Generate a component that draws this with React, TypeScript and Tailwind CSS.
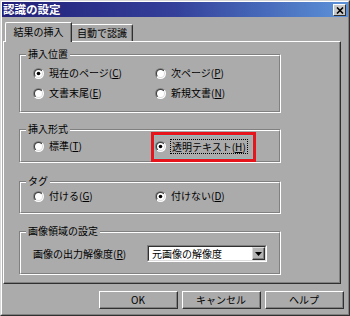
import React, { useId } from "react";

const FONT = { fontFamily: '"Noto Sans CJK JP", "Noto Sans", sans-serif' };

function Radio({ checked }: { checked?: boolean }) {
  const id = useId().replace(/:/g, "");
  return (
    <svg width="11" height="11" viewBox="0 0 11 11" className="shrink-0">
      <defs>
        <linearGradient id={`o${id}`} x1="0" y1="0" x2="1" y2="1">
          <stop offset="0.5" stopColor="#808080" />
          <stop offset="0.5" stopColor="#ffffff" />
        </linearGradient>
        <linearGradient id={`i${id}`} x1="0" y1="0" x2="1" y2="1">
          <stop offset="0.5" stopColor="#404040" />
          <stop offset="0.5" stopColor="#dcdcdc" />
        </linearGradient>
      </defs>
      <circle cx="5.5" cy="5.5" r="5.5" fill={`url(#o${id})`} />
      <circle cx="5.5" cy="5.5" r="4.5" fill={`url(#i${id})`} />
      <circle cx="5.5" cy="5.5" r="3.5" fill="#ffffff" />
      {checked && <circle cx="5.5" cy="5.5" r="1.8" fill="#000" />}
    </svg>
  );
}

function Key({ k }: { k: string }) {
  return (
    <>
      (<span className="underline underline-offset-1">{k}</span>)
    </>
  );
}

function Group({
  label,
  className,
  children,
}: {
  label: string;
  className: string;
  children?: React.ReactNode;
}) {
  return (
    <div
      className={`relative ml-[15px] w-[262px] border border-t-[#808080] border-l-[#808080] border-r-white border-b-white ${className}`}
    >
      <div className="h-full border border-t-white border-l-white border-r-[#808080] border-b-[#808080]">
        {children}
      </div>
      <span className="absolute left-[6px] top-[-8px] bg-[#ababab] px-[2px] text-[10px] leading-[14px] text-black">
        {label}
      </span>
    </div>
  );
}

function RadioItem({
  checked,
  children,
  width,
}: {
  checked?: boolean;
  children: React.ReactNode;
  width?: string;
}) {
  return (
    <div className={`flex h-[16px] items-center ${width ?? ""}`}>
      <Radio checked={checked} />
      <span className="ml-[5px] text-[10px] leading-[14px] text-black whitespace-nowrap">
        {children}
      </span>
    </div>
  );
}

function Button({ children }: { children: React.ReactNode }) {
  return (
    <div className="h-[18px] w-[79px] border border-t-white border-l-white border-r-[#303030] border-b-[#303030]">
      <div className="flex h-full items-center justify-center border-r border-b border-r-[#808080] border-b-[#808080] text-[10px] leading-[14px] text-black">
        {children}
      </div>
    </div>
  );
}

export default function App() {
  return (
    <div
      className="h-[316px] w-[350px] overflow-hidden bg-[#ababab]"
      style={FONT}
    >
      <div className="h-full border border-t-[#d8d8d8] border-l-[#d8d8d8] border-r-[#303030] border-b-[#303030]">
        <div className="flex h-full flex-col border border-t-white border-l-white border-r-[#808080] border-b-[#808080]">
          {/* Title bar */}
          <div className="flex h-[15px] shrink-0 items-center bg-gradient-to-r from-[#221f78] via-[#34409a] to-[#5c92d8] pl-[1px] pr-[2px]">
            <span className="text-[11.5px] font-bold leading-[15px] text-white">
              認識の設定
            </span>
            <div className="ml-auto mt-[1px] flex h-[12px] w-[13px] items-center justify-center border border-t-white border-l-white border-r-[#303030] border-b-[#303030] bg-[#c8c8c8]">
              <svg width="8" height="7" viewBox="0 0 8 7">
                <path d="M1 0.5 L7 6.5 M7 0.5 L1 6.5" stroke="#000" strokeWidth="1.6" />
              </svg>
            </div>
          </div>

          {/* Tabs */}
          <div className="flex h-[24px] shrink-0 items-end pl-[3px]">
            <div className="relative z-10 mb-[-1px] flex h-[20px] w-[67px] items-center justify-center rounded-tl-[2px] border-l border-t border-r border-l-white border-t-white border-r-[#303030] bg-[#ababab] pb-[1px] text-[10px] leading-[14px] text-black shadow-[inset_-1px_0_#808080]">
              結果の挿入
            </div>
            <div className="flex h-[17px] w-[61px] items-center justify-center rounded-tr-[2px] border-t border-r border-t-white border-r-[#303030] text-[10px] leading-[14px] text-black shadow-[inset_-1px_0_#808080]">
              自動で認識
            </div>
          </div>

          {/* Panel */}
          <div className="ml-[1px] h-[243px] w-[338px] shrink-0 border border-t-white border-l-white border-r-[#303030] border-b-[#303030]">
            <div className="h-full border-r border-b border-r-[#808080] border-b-[#808080] pt-[12px]">
              <Group label="挿入位置" className="h-[59px]">
                <div className="grid grid-cols-[122px_1fr] gap-y-[4px] pl-[12px] pt-[9px]">
                  <RadioItem checked>
                    現在のページ<Key k="C" />
                  </RadioItem>
                  <RadioItem>
                    次ページ<Key k="P" />
                  </RadioItem>
                  <RadioItem>
                    文書末尾<Key k="E" />
                  </RadioItem>
                  <RadioItem>
                    新規文書<Key k="N" />
                  </RadioItem>
                </div>
              </Group>

              <Group label="挿入形式" className="mt-[16px] h-[34px]">
                <div className="grid grid-cols-[122px_1fr] pl-[12px] pt-[7px]">
                  <RadioItem>
                    標準<Key k="T" />
                  </RadioItem>
                  <div className="flex h-[16px] items-center">
                    <Radio checked />
                    <span className="ml-[4px] border border-dotted border-black px-[1px] text-[10px] leading-[13px] text-black whitespace-nowrap">
                      透明テキスト<Key k="H" />
                    </span>
                  </div>
                </div>
                <div className="pointer-events-none absolute left-[131px] top-[2px] h-[30px] w-[105px] border-[3px] border-[#e8141c] shadow-[inset_0_0_0_1px_#8fbcbc]" />
              </Group>

              <Group label="タグ" className="mt-[18px] h-[33px]">
                <div className="grid grid-cols-[122px_1fr] pl-[12px] pt-[5px]">
                  <RadioItem>
                    付ける<Key k="G" />
                  </RadioItem>
                  <RadioItem checked>
                    付けない<Key k="D" />
                  </RadioItem>
                </div>
              </Group>

              <Group label="画像領域の設定" className="mt-[17px] h-[44px]">
                <div className="flex items-center pl-[12px] pt-[12px]">
                  <span className="w-[114px] text-[10px] leading-[17px] text-black whitespace-nowrap">
                    画像の出力解像度<Key k="R" />
                  </span>
                  <div className="h-[17px] w-[120px] border border-t-[#808080] border-l-[#808080] border-r-white border-b-white">
                    <div className="flex h-full items-center border border-t-[#303030] border-l-[#303030] border-r-[#dcdcdc] border-b-[#dcdcdc] bg-white">
                      <span className="pl-[3px] text-[10px] leading-[13px] text-black whitespace-nowrap">
                        元画像の解像度
                      </span>
                      <div className="ml-auto flex h-[13px] w-[13px] items-center justify-center border border-t-[#dcdcdc] border-l-[#dcdcdc] border-r-[#303030] border-b-[#303030] bg-[#b4b4b4] shadow-[inset_-1px_-1px_#808080]">
                        <svg width="7" height="4" viewBox="0 0 7 4">
                          <path d="M0 0 H7 L3.5 4 Z" fill="#000" />
                        </svg>
                      </div>
                    </div>
                  </div>
                </div>
              </Group>
            </div>
          </div>

          {/* Buttons */}
          <div className="mt-[7px] flex justify-end gap-[4px] pr-[4px]">
            <Button>OK</Button>
            <Button>キャンセル</Button>
            <Button>ヘルプ</Button>
          </div>
        </div>
      </div>
    </div>
  );
}
